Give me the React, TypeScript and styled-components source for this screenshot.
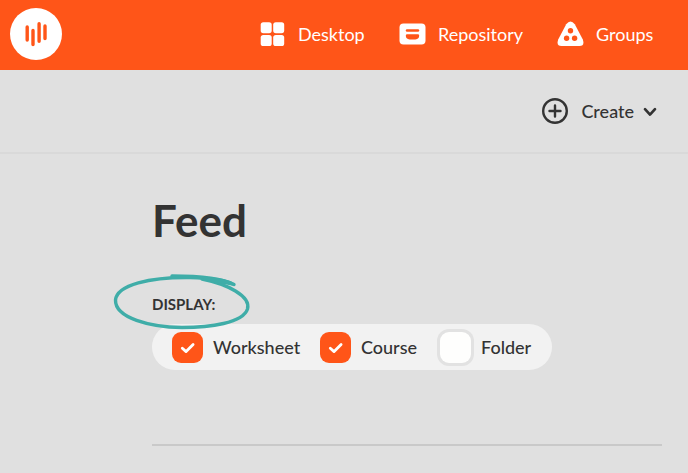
import React from "react";
import styled, { createGlobalStyle } from "styled-components";

const GlobalStyle = createGlobalStyle`
  *, *::before, *::after { box-sizing: border-box; }
  body {
    margin: 0;
    background: #e0e0e0;
    color: #333333;
    font-family: Lato, "Open Sans", sans-serif;
    font-size: 18px;
    line-height: 24px;
  }
`;

const Header = styled.header`
  display: flex;
  align-items: center;
  justify-content: space-between;
  height: 70px;
  padding: 0 32px 2px 10px;
  background: #ff5518;
`;

const LogoLink = styled.a`
  display: block;
  width: 52px;
  height: 52px;
  svg { display: block; }
`;

const Nav = styled.nav`
  display: flex;
  gap: 32px;
`;

const NavLink = styled.a<{ $width: number }>`
  display: flex;
  align-items: center;
  gap: 12px;
  width: ${({ $width }) => $width}px;
  color: #ffffff;
  text-decoration: none;
  white-space: nowrap;
  svg { flex: none; }
`;

const Toolbar = styled.div`
  display: flex;
  align-items: center;
  justify-content: flex-end;
  height: 84px;
  padding: 0 30px 0 0;
  border-bottom: 2px solid #d9d9d9;
`;

const CreateButton = styled.button`
  display: flex;
  align-items: center;
  padding: 0;
  border: 0;
  background: none;
  color: inherit;
  font: inherit;
  font-weight: 500;
  cursor: pointer;
`;

const CreateLabel = styled.span`
  margin: 0 8px 0 12px;
`;

const Main = styled.main`
  padding: 38px 26px 24px 152px;
`;

const Title = styled.h1`
  margin: 0;
  font-size: 44px;
  font-weight: 700;
  line-height: 56px;
`;

const Filters = styled.fieldset`
  margin: 46px 0 0;
  padding: 0;
  border: 0;
  min-width: 0;
`;

const Legend = styled.legend`
  position: relative;
  padding: 0;
  font-size: 15px;
  font-weight: 700;
  line-height: 20px;
`;

const Highlight = styled.svg`
  position: absolute;
  left: -40px;
  top: -22px;
  pointer-events: none;
  z-index: 1;
`;

const Options = styled.div`
  display: inline-flex;
  align-items: center;
  gap: 20px;
  height: 46px;
  margin-top: 10px;
  padding: 0 20px;
  border-radius: 23px;
  background: #f2f2f2;
`;

const Option = styled.label<{ $width: number }>`
  display: flex;
  align-items: center;
  gap: 10px;
  width: ${({ $width }) => $width}px;
  white-space: nowrap;
  font-weight: 500;
  cursor: pointer;
`;

const Box = styled.span`
  position: relative;
  display: block;
  flex: none;
  width: 31px;
  height: 31px;
  svg {
    position: absolute;
    inset: 0;
    pointer-events: none;
    display: none;
  }
  input:checked + svg { display: block; }
`;

const Checkbox = styled.input`
  appearance: none;
  display: block;
  width: 31px;
  height: 31px;
  margin: 0;
  border-radius: 9px;
  background: #fefefd;
  box-shadow: 0 0 0 3px #e2e2e2;
  &:checked {
    background: #ff5518;
    box-shadow: none;
  }
`;

const Divider = styled.hr`
  height: 2px;
  margin: 74px 0 0;
  border: 0;
  background: #c9c9c9;
`;

const Logo = () => (
  <svg width="52" height="52" viewBox="0 0 52 52" aria-hidden="true">
    <circle cx="26" cy="26" r="26" fill="#fff" />
    <path d="M17.2 19v13M23 22.500v14M29.100 15.800v17.400M35 18v12.500" stroke="#ff5518" strokeWidth="3.4" strokeLinecap="round" />
  </svg>
);

const DesktopIcon = () => (
  <svg width="26" height="26" viewBox="0 0 26 26" fill="#fff" aria-hidden="true">
    <rect x="0.7" y="1.2" width="11" height="11" rx="2.6" />
    <rect x="13.2" y="1.2" width="11" height="11" rx="2.6" />
    <rect x="0.7" y="14" width="11" height="11" rx="2.6" />
    <rect x="13.2" y="14" width="11" height="11" rx="2.6" />
  </svg>
);

const RepositoryIcon = () => (
  <svg width="27" height="26" viewBox="0 0 27 26" aria-hidden="true">
    <rect x="0.5" y="2.5" width="26" height="21" rx="4" fill="#fff" />
    <path d="M8 9.500h11" stroke="#ff5518" strokeWidth="2.4" strokeLinecap="round" />
    <path d="M8.200 13.300h10.600q1.400 0 1.400 1.300q0 3.800-3.800 3.800h-5.800q-3.800 0-3.800-3.800q0-1.300 1.400-1.300z" fill="#ff5518" />
  </svg>
);

const GroupsIcon = () => (
  <svg width="27" height="26" viewBox="0 0 27 26" aria-hidden="true">
    <path d="M9.2 3.3Q13.5-2.4 17.8 3.3L25.8 18.5Q28 25 22.5 25H4.5Q-1 25 1.2 18.5Z" fill="#fff" />
    <g fill="#ff5518">
      <circle cx="13.5" cy="9.8" r="2.7" />
      <circle cx="9.6" cy="17.3" r="2.7" />
      <circle cx="17.6" cy="17.3" r="2.7" />
    </g>
  </svg>
);

const PlusIcon = () => (
  <svg width="28" height="28" viewBox="0 0 28 28" fill="none" stroke="#333" strokeWidth="2.4" strokeLinecap="round" aria-hidden="true">
    <circle cx="14" cy="14" r="11.8" />
    <path d="M14 8.5v11M8.5 14h11" />
  </svg>
);

const ChevronIcon = () => (
  <svg width="16" height="16" viewBox="0 0 16 16" fill="none" stroke="#333" strokeWidth="2.7" strokeLinecap="round" strokeLinejoin="round" aria-hidden="true">
    <path d="M3 6.2l5 5.4 5-5.4" />
  </svg>
);

const CheckIcon = () => (
  <svg width="31" height="31" viewBox="0 0 31 31" fill="none" stroke="#fff" strokeWidth="2.8" strokeLinecap="round" strokeLinejoin="round" aria-hidden="true">
    <path d="M10.3 16.2l3.8 3.4 7-7.2" />
  </svg>
);

const HandDrawnOval = () => (
  <Highlight width="140" height="60" viewBox="0 0 140 60" fill="none" aria-hidden="true">
    <path
      d="M60 4C80 4 108 5 122 12.500M90 7C115 12 139 24 135.500 37C131 51 98 55.500 70 55.500C38 55 3 46 3.500 28C5 13 38 5 78 5.500C96 6 112 8 122 12.500"
      stroke="#3fada8"
      strokeWidth="3.4"
      strokeLinecap="round"
      strokeLinejoin="round"
    />
    <path d="M84 4L106 6Q124 9 123 14L100 10Z" fill="#3fada8" />
  </Highlight>
);

const navigation = [
  { name: "Desktop", Icon: DesktopIcon, width: 107 },
  { name: "Repository", Icon: RepositoryIcon, width: 126 },
  { name: "Groups", Icon: GroupsIcon, width: 99 },
];

const filters = [
  { name: "Worksheet", checked: true, width: 128 },
  { name: "Course", checked: true, width: 100 },
  { name: "Folder", checked: false, width: 92 },
];

export default function App() {
  return (
    <>
      <GlobalStyle />
      <Header>
        <LogoLink href="#" aria-label="Home"><Logo /></LogoLink>
        <Nav>
          {navigation.map(({ name, Icon, width }) => (
            <NavLink key={name} href="#" $width={width}>
              <Icon />
              {name}
            </NavLink>
          ))}
        </Nav>
      </Header>
      <Toolbar>
        <CreateButton type="button">
          <PlusIcon />
          <CreateLabel>Create</CreateLabel>
          <ChevronIcon />
        </CreateButton>
      </Toolbar>
      <Main>
        <Title>Feed</Title>
        <Filters>
          <Legend>
            DISPLAY:
            <HandDrawnOval />
          </Legend>
          <Options>
            {filters.map(({ name, checked, width }) => (
              <Option key={name} $width={width}>
                <Box>
                  <Checkbox type="checkbox" defaultChecked={checked} />
                  <CheckIcon />
                </Box>
                {name}
              </Option>
            ))}
          </Options>
        </Filters>
        <Divider />
      </Main>
    </>
  );
}
